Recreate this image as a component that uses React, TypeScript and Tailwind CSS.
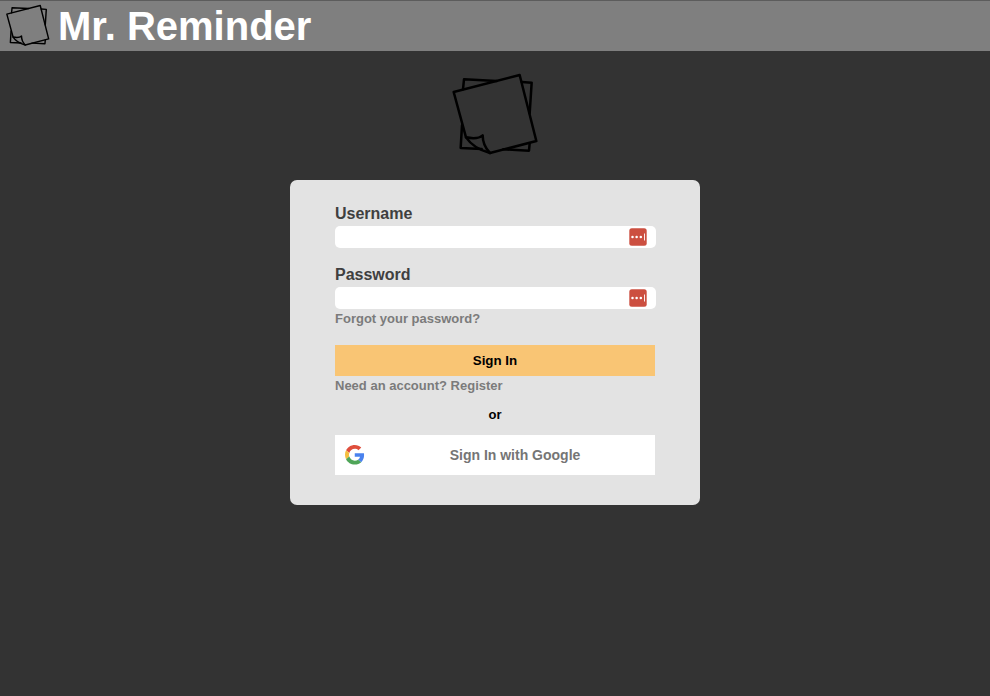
import React from 'react';

function NotesLogo({ className }: { className: string }) {
  return (
    <svg viewBox="36 36 261 252" fill="none" stroke="#000" strokeLinejoin="round" strokeLinecap="round" className={className}>
      <path d="M69 88 72 58 170 63M245 66 275 68 269 160M269 250 267 272 190 268M125 267 62 264 66 196" />
      <path d="M41 96 239 45 289 243 150 279C120 271 93 254 78 232Z" />
      <path d="M78 232C98 236 118 235 128 226C128 246 136 265 150 279" />
    </svg>
  );
}

function GoogleLogo() {
  return (
    <svg viewBox="0 0 48 48" className="mx-[0.25px] h-[19.5px] w-[19.5px] shrink-0">
      <path fill="#DF4E3C" d="M24 9.5c3.54 0 6.71 1.22 9.21 3.6l6.85-6.85C35.9 2.38 30.47 0 24 0 14.62 0 6.51 5.38 2.56 13.22l7.98 6.19C12.43 13.72 17.74 9.5 24 9.5z" />
      <path fill="#4A82EE" d="M46.98 24.55c0-1.57-.15-3.09-.38-4.55H24v9.02h12.94c-.58 2.96-2.26 5.48-4.78 7.18l7.73 6c4.51-4.18 7.09-10.36 7.09-17.65z" />
      <path fill="#F4BF3F" d="M10.53 28.59c-.48-1.45-.76-2.99-.76-4.59s.27-3.14.76-4.59l-7.98-6.19C.92 16.46 0 20.12 0 24c0 3.88.92 7.54 2.56 10.78l7.97-6.19z" />
      <path fill="#4FA558" d="M24 48c6.48 0 11.93-2.13 15.89-5.81l-7.73-6c-2.15 1.45-4.92 2.3-8.16 2.3-6.26 0-11.57-4.22-13.47-9.91l-7.98 6.19C6.51 42.62 14.62 48 24 48z" />
    </svg>
  );
}

function PasswordManagerIcon() {
  return (
    <svg viewBox="0 0 18 18" className="h-[18px] w-[18px] shrink-0">
      <rect x="0.3" y="0.3" width="17.4" height="17.4" rx="2.5" fill="#cc4f40" />
      <g fill="#fff">
        <circle cx="3.5" cy="9" r="1.25" />
        <circle cx="7.6" cy="9" r="1.25" />
        <circle cx="11.8" cy="9" r="1.25" />
        <rect x="15" y="5.5" width="0.9" height="7" />
      </g>
    </svg>
  );
}

function Field({ id, label, type }: { id: string; label: string; type: string }) {
  return (
    <div>
      <label htmlFor={id} className="block h-[22px] text-[16px] leading-[19px] text-[#3f3f3f]">{label}</label>
      <div className="flex h-[22px] w-[321px] items-center rounded-[5px] bg-white pr-[9px]">
        <input id={id} type={type} className="h-full min-w-0 flex-1 bg-transparent px-1 outline-none" />
        <PasswordManagerIcon />
      </div>
    </div>
  );
}

export default function App() {
  return (
    <div className="flex h-screen flex-col items-center overflow-hidden bg-[#333333] font-['Liberation_Sans',Arial,sans-serif] font-bold">
      <header className="flex h-[51px] w-full shrink-0 items-start border-t border-[#5c5c5c] bg-[#7f7f7f] pl-[6px]">
        <NotesLogo className="mt-[2.8px] h-[42.5px] w-11 shrink-0 stroke-[8.5]" />
        <h1 className="ml-[8px] mt-[2px] text-[40px] leading-[46px] text-white">Mr. Reminder</h1>
      </header>
      <NotesLogo className="ml-px mt-[21px] h-[84px] w-[87px] shrink-0 stroke-[7.5]" />
      <form className="mt-6 flex h-[325px] w-[410px] shrink-0 flex-col rounded-[7px] bg-[#e3e3e3] px-[45px] pt-6">
        <Field id="username" label="Username" type="text" />
        <div className="mt-[17px]">
          <Field id="password" label="Password" type="password" />
        </div>
        <a className="mt-[2px] text-[13px] leading-[15px] text-[#7b7b7b]">Forgot your password?</a>
        <button type="button" className="mt-[19px] h-[31px] w-full bg-[#f9c574] text-[13.333px] leading-[15px] text-black">Sign In</button>
        <a className="mt-[2px] text-[13px] leading-[15px] text-[#7b7b7b]">Need an account? Register</a>
        <p className="mt-[14px] text-center text-[13px] leading-[15px] text-black">or</p>
        <button type="button" className="mt-[13px] flex h-10 w-full items-center bg-white pl-[10px] text-[14px] text-[#757575]">
          <GoogleLogo />
          <span className="flex-1 pl-[10px] text-center">Sign In with Google</span>
        </button>
      </form>
    </div>
  );
}
